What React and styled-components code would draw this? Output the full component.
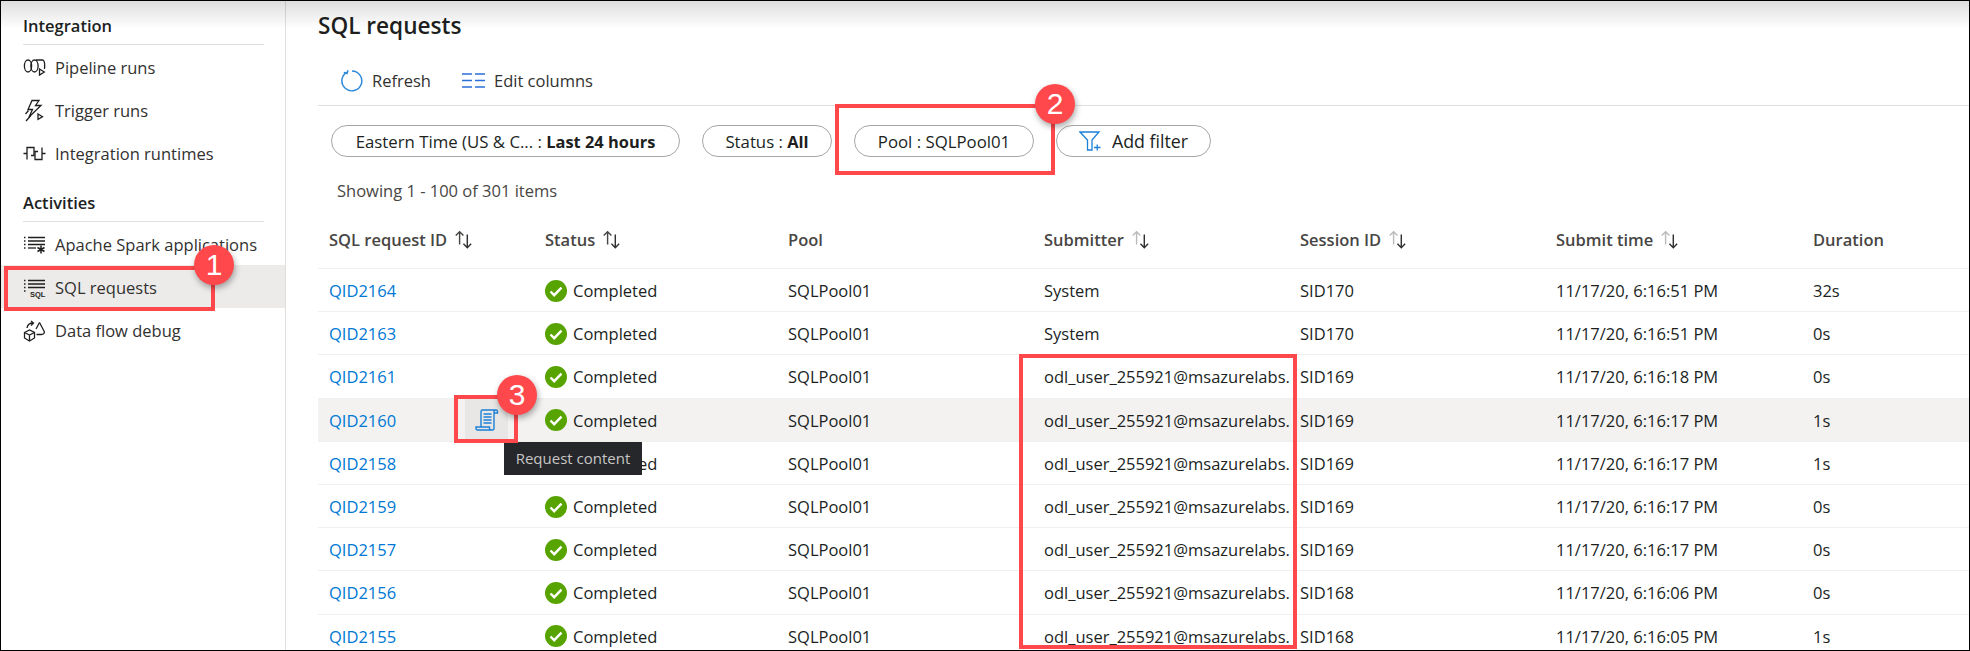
import styled, { createGlobalStyle } from 'styled-components';

const GlobalStyle = createGlobalStyle`
    html, body {
        margin: 0;
        padding: 0;
        background: #ffffff;
    }
    * {
        box-sizing: border-box;
    }
`;

const Frame = styled.div`
    position: relative;
    display: flex;
    width: 1970px;
    height: 651px;
    overflow: hidden;
    background: #ffffff;
    border: 1px solid #000000;
    font-family: "Open Sans", "Noto Sans", sans-serif;
    font-size: 16.5px;
    color: #201f1e;
`;

const TopShade = styled.div`
    position: absolute;
    top: 0;
    left: 0;
    right: 0;
    height: 28px;
    background: linear-gradient(rgba(0, 0, 0, 0.13), rgba(0, 0, 0, 0));
    pointer-events: none;
`;

const Sidebar = styled.aside`
    position: relative;
    width: 285px;
    flex: none;
    padding-top: 14px;
    border-right: 1px solid #e1dfdd;
`;

const SideHeading = styled.div`
    margin: 0 21px 0 22px;
    height: 30px;
    font-size: 16.5px;
    line-height: 21px;
    font-weight: 600;
    color: #201f1e;
    border-bottom: 1px solid #e1dfdd;
`;

const SideGroup = styled.div`
    margin-bottom: 17px;
`;

const SideItem = styled.div`
    display: flex;
    align-items: center;
    gap: 9px;
    height: 43.2px;
    padding-left: 22px;
    padding-top: 2px;
    color: #323130;
    background: ${(p) => (p.$active ? '#edebe9' : 'transparent')};
`;

const SideIcon = styled.svg`
    width: 23px;
    height: 23px;
    flex: none;
    fill: none;
    stroke: #201f1e;
    stroke-width: 1.3;
`;

const Main = styled.main`
    position: relative;
    flex: 1;
    min-width: 0;
    padding-left: 32px;
    padding-top: 10px;
`;

const Title = styled.h1`
    margin: 0;
    height: 36px;
    font-size: 22.6px;
    line-height: 30px;
    font-weight: 600;
    color: #201f1e;
`;

const Toolbar = styled.div`
    display: flex;
    align-items: center;
    gap: 31px;
    height: 59px;
    padding-left: 22px;
    padding-top: 8px;
    border-bottom: 1px solid #e1dfdd;
`;

const ToolButton = styled.div`
    display: flex;
    align-items: center;
    gap: 9px;
    color: #323130;
`;

const FilterRow = styled.div`
    display: flex;
    align-items: center;
    gap: 22px;
    height: 32px;
    margin-top: 19px;
    padding-left: 13px;
`;

const Chip = styled.div`
    display: flex;
    align-items: center;
    justify-content: center;
    gap: 11px;
    height: 32px;
    width: ${(p) => p.$width}px;
    border: 1px solid #a8a6a4;
    border-radius: 16px;
    font-size: ${(p) => p.$size || 16.8}px;
    color: #201f1e;
    white-space: pre;
`;

const ChipValue = styled.b`
    font-weight: 700;
    font-size: 16.4px;
`;

const Count = styled.div`
    height: 34px;
    margin-top: 17px;
    padding-left: 19px;
    line-height: 34px;
    color: #484644;
`;

const Grid = styled.div`
    display: grid;
    grid-template-columns: 216px 243px 256px 256px 256px 257px 1fr;
    align-items: center;
    height: ${(p) => (p.$head ? '61px' : '43.2px')};
    padding-left: 11px;
    padding-top: 1px;
    border-bottom: 1px solid #f0efee;
    background: ${(p) => (p.$hover ? '#f3f2f1' : 'transparent')};
`;

const HeadCell = styled.div`
    display: flex;
    align-items: center;
    gap: 6px;
    font-weight: 600;
    font-size: 16.5px;
    color: #484644;
    padding-top: 2px;
`;

const Cell = styled.div`
    display: flex;
    align-items: center;
    gap: 6px;
    white-space: nowrap;
    color: #201f1e;
`;

const RequestLink = styled.a`
    color: #0078d4;
    text-decoration: none;
`;

const SortIcon = styled.svg`
    width: 22px;
    height: 20px;
    fill: none;
    stroke-width: 1.3;
`;

const CheckIcon = styled.svg`
    width: 22px;
    height: 22px;
    flex: none;
`;

const ActionButton = styled.div`
    position: absolute;
    left: 464px;
    top: 398px;
    width: 43px;
    height: 41px;
    display: flex;
    align-items: center;
    justify-content: center;
    background: #e9e7e5;
`;

const Tooltip = styled.div`
    position: absolute;
    left: 503px;
    top: 441px;
    width: 138px;
    height: 33px;
    line-height: 32px;
    text-align: center;
    font-size: 15px;
    color: #c8c6c4;
    background: #25272b;
`;

const Callout = styled.div`
    position: absolute;
    left: ${(p) => p.$x}px;
    top: ${(p) => p.$y}px;
    width: ${(p) => p.$w}px;
    height: ${(p) => p.$h}px;
    border: 4px solid #ff484c;
`;

const Badge = styled.div`
    position: absolute;
    left: ${(p) => p.$x - 20}px;
    top: ${(p) => p.$y - 20}px;
    width: 40px;
    height: 40px;
    border-radius: 50%;
    background: #ff484c;
    color: #ffffff;
    font-family: "Liberation Sans", sans-serif;
    font-size: 30px;
    line-height: 40px;
    text-align: center;
    box-shadow: 1px 3px 6px rgba(0, 0, 0, 0.35);
`;

function PipelineIcon() {
    return (
        <SideIcon viewBox="0 0 23 23">
            <ellipse cx="5" cy="10" rx="3.6" ry="6" />
            <ellipse cx="11.500" cy="10" rx="3.6" ry="6" />
            <path d="M13 4h6.500c1.400 0 2.200 2.500 2.200 6 0 1.200-.1 2.200-.3 3" />
            <path d="M16.500 13l4.800 3-4.800 3z" />
        </SideIcon>
    );
}

function TriggerIcon() {
    return (
        <SideIcon viewBox="0 0 23 23">
            <path d="M9 1.500h7l-3.500 5h5.500L6 18l3.500-7.500H5z" />
            <path d="M3 22l4.500-5M5.500 11.500l-3 3.500" />
            <path d="M15 15l4.500 2.700-4.500 2.700z" />
        </SideIcon>
    );
}

function RuntimeIcon() {
    return (
        <SideIcon viewBox="0 0 23 23">
            <path d="M0.500 11.500h3.500M19 11.500h3.500" />
            <path d="M4 17.500V5.500h7v8H8" />
            <path d="M19 5.500v12h-7v-8h3" />
        </SideIcon>
    );
}

function ListLines() {
    return (
        <>
            <path d="M1 4.500h1.500M1 8h1.500M1 11.500h1.500M1 15h1.500" />
            <path d="M5 4.500h17M5 8h17M5 11.500h17" />
        </>
    );
}

function SparkIcon() {
    return (
        <SideIcon viewBox="0 0 23 23">
            <ListLines />
            <path d="M5 15h8" />
            <path d="M18 12.500v8M14.500 14.500l7 4M21.500 14.500l-7 4" strokeWidth="1.500" />
        </SideIcon>
    );
}

function SqlIcon() {
    return (
        <SideIcon viewBox="0 0 23 23">
            <ListLines />
            <text x="7" y="20.500" fontSize="7.500" fontWeight="700" fill="#201f1e" stroke="none" fontFamily="Liberation Sans, sans-serif">SQL</text>
        </SideIcon>
    );
}

function DataFlowIcon() {
    return (
        <SideIcon viewBox="0 0 23 23">
            <path d="M1.500 13.500l5-2.500 5 2.500v5.500l-5 3-5-3zM1.500 13.500l5 2.500 5-2.500M6.500 16v6" />
            <path d="M16.500 3.500l5 9.500a3 3 0 0 1-3 2.500h-5" />
            <path d="M16.500 3.500L13 10" />
            <path d="M4 9c.5-3 2.500-5 6-5M8 2l2.500 2L8 6.500" />
        </SideIcon>
    );
}

function RefreshIcon() {
    return (
        <svg width="23" height="23" viewBox="0 0 24 24" fill="none" stroke="#2b88d8" strokeWidth="1.500">
            <path d="M7.500 3.200a10.400 10.400 0 1 0 5-1.200" />
            <path d="M7.800 1v3.500H4.300" transform="rotate(20 7 3)" />
        </svg>
    );
}

function ColumnsIcon() {
    return (
        <svg width="23" height="23" viewBox="0 0 23 23" fill="none" stroke="#2b6fd8" strokeWidth="1.400">
            <path d="M0 5h10M13 5h10M0 11.500h10M13 11.500h10M0 18h10M13 18h10" />
        </svg>
    );
}

function FilterIcon() {
    return (
        <svg width="22" height="20" viewBox="0 0 22 20" fill="none" stroke="#1b80d8" strokeWidth="1.300">
            <path d="M1 1h19l-7 8v10H8.500V9z" />
            <path d="M15 16.500h6.500M18.200 13.500v6" />
        </svg>
    );
}

function Sort({ dim }) {
    return (
        <SortIcon viewBox="0 0 20 18">
            <path d="M6 13V1.500M2.500 5L6 1.500 9.500 5" stroke={dim ? '#bdbbb9' : '#484644'} />
            <path d="M13 4v12M9.500 12.500L13 16l3.500-3.500" stroke="#323130" />
        </SortIcon>
    );
}

function Check() {
    return (
        <CheckIcon viewBox="0 0 22 22">
            <circle cx="11" cy="11" r="11" fill="#57a300" />
            <path d="M5.500 11.500l3.700 3.700 7.300-7.600" fill="none" stroke="#ffffff" strokeWidth="2.400" />
        </CheckIcon>
    );
}

function ScrollIcon() {
    return (
        <svg width="24" height="24" viewBox="0 0 24 24" fill="none" stroke="#1b80d8" strokeWidth="1.400">
            <path d="M6 19V3.500c0-1 .7-1.500 1.500-1.500H21c-1.200 0-2 .7-2 2v16.500c0 1-.8 1.500-1.800 1.500H2.500c-1 0-1.500-.7-1.500-1.500V19h13.500v1.500c0 1 .8 1.500 1.700 1.500" />
            <path d="M19 5h3.500V3.500c0-1-.7-1.500-1.500-1.500" />
            <path d="M8.500 6h8M8.500 9h8M8.500 12h8M8.500 15h8" />
        </svg>
    );
}

const USER = 'odl_user_255921@msazurelabs.';

const ROWS = [
    ['QID2164', 'System', 'SID170', '11/17/20, 6:16:51 PM', '32s'],
    ['QID2163', 'System', 'SID170', '11/17/20, 6:16:51 PM', '0s'],
    ['QID2161', USER, 'SID169', '11/17/20, 6:16:18 PM', '0s'],
    ['QID2160', USER, 'SID169', '11/17/20, 6:16:17 PM', '1s'],
    ['QID2158', USER, 'SID169', '11/17/20, 6:16:17 PM', '1s'],
    ['QID2159', USER, 'SID169', '11/17/20, 6:16:17 PM', '0s'],
    ['QID2157', USER, 'SID169', '11/17/20, 6:16:17 PM', '0s'],
    ['QID2156', USER, 'SID168', '11/17/20, 6:16:06 PM', '0s'],
    ['QID2155', USER, 'SID168', '11/17/20, 6:16:05 PM', '1s'],
];

export default function App() {
    return (
        <Frame>
            <GlobalStyle />
            <Sidebar>
                <SideHeading>Integration</SideHeading>
                <SideGroup>
                    <SideItem><PipelineIcon />Pipeline runs</SideItem>
                    <SideItem><TriggerIcon />Trigger runs</SideItem>
                    <SideItem><RuntimeIcon />Integration runtimes</SideItem>
                </SideGroup>
                <SideHeading>Activities</SideHeading>
                <SideGroup>
                    <SideItem><SparkIcon />Apache Spark applications</SideItem>
                    <SideItem $active><SqlIcon />SQL requests</SideItem>
                    <SideItem><DataFlowIcon />Data flow debug</SideItem>
                </SideGroup>
            </Sidebar>
            <Main>
                <Title>SQL requests</Title>
                <Toolbar>
                    <ToolButton><RefreshIcon />Refresh</ToolButton>
                    <ToolButton><ColumnsIcon />Edit columns</ToolButton>
                </Toolbar>
                <FilterRow>
                    <Chip $width={349}><span>Eastern Time (US &amp; C... : <ChipValue>Last 24 hours</ChipValue></span></Chip>
                    <Chip $width={130}><span>Status : <ChipValue>All</ChipValue></span></Chip>
                    <Chip $width={180}>Pool : SQLPool01</Chip>
                    <Chip $width={155} $size={17.8}><FilterIcon />Add filter</Chip>
                </FilterRow>
                <Count>Showing 1 - 100 of 301 items</Count>
                <Grid $head>
                    <HeadCell>SQL request ID <Sort /></HeadCell>
                    <HeadCell>Status <Sort /></HeadCell>
                    <HeadCell>Pool</HeadCell>
                    <HeadCell>Submitter <Sort dim /></HeadCell>
                    <HeadCell>Session ID <Sort dim /></HeadCell>
                    <HeadCell>Submit time <Sort dim /></HeadCell>
                    <HeadCell>Duration</HeadCell>
                </Grid>
                {ROWS.map((row) => (
                    <Grid key={row[0]} $hover={row[0] === 'QID2160'}>
                        <Cell><RequestLink>{row[0]}</RequestLink></Cell>
                        <Cell><Check />Completed</Cell>
                        <Cell>SQLPool01</Cell>
                        <Cell>{row[1]}</Cell>
                        <Cell>{row[2]}</Cell>
                        <Cell>{row[3]}</Cell>
                        <Cell>{row[4]}</Cell>
                    </Grid>
                ))}
            </Main>
            <TopShade />
            <ActionButton><ScrollIcon /></ActionButton>
            <Tooltip>Request content</Tooltip>
            <Callout $x={3} $y={265} $w={211} $h={45} />
            <Callout $x={834} $y={103} $w={220} $h={71} />
            <Callout $x={453} $y={394} $w={64} $h={48} />
            <Callout $x={1018} $y={353} $w={278} $h={295} />
            <Badge $x={213} $y={264}>1</Badge>
            <Badge $x={1054} $y={103}>2</Badge>
            <Badge $x={516} $y={394}>3</Badge>
        </Frame>
    );
}
